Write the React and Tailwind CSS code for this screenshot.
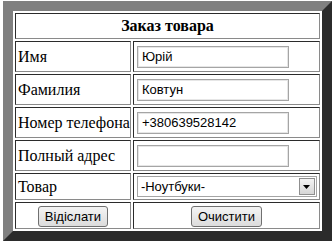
export default function App() {
  const cell = "border border-t-[#2b2b2b] border-l-[#2b2b2b] border-b-[#8a8a8a] border-r-[#8a8a8a] p-0";
  const label = cell + " w-[115px] pl-[2px] text-[16px] text-black";
  const input =
    "block w-[152px] h-[22px] border border-[#a5a5a5] shadow-[inset_0_0_0_1px_#e6e6e6] bg-white px-[4px] text-[13px] text-black outline-none font-['Liberation_Sans',Arial,sans-serif]";
  const btn =
    "h-[21px] px-[6px] rounded-[3px] border border-[#707070] bg-gradient-to-b from-[#f4f4f4] to-[#dcdcdc] text-[13px] text-black font-['Liberation_Sans',Arial,sans-serif]";

  const rows = [
    ["Имя", "Юрій"],
    ["Фамилия", "Ковтун"],
    ["Номер телефона", "+380639528142"],
    ["Полный адрес", ""],
  ];

  return (
    <div className="w-[336px] h-[243px] bg-white pt-[1px] pl-[3px] font-['Liberation_Serif','Times_New_Roman',serif]">
      <table className="w-[329px] border-separate border-spacing-[2px] border-[10px] border-t-[#808080] border-l-[#808080] border-b-[#2b2b2b] border-r-[#2b2b2b]">
        <tbody>
          <tr>
            <td colSpan={2} className={cell + " h-[25px] text-center text-[16px] font-bold"}>
              Заказ товара
            </td>
          </tr>
          {rows.map(([name, value]) => (
            <tr key={name}>
              <td className={label + " h-[31px] whitespace-nowrap"}>{name}</td>
              <td className={cell + " h-[31px] pl-[3px]"}>
                <input className={input} defaultValue={value} />
              </td>
            </tr>
          ))}
          <tr>
            <td className={label + " h-[27px]"}>Товар</td>
            <td className={cell + " h-[27px] pl-[3px]"}>
              <div className="relative w-[180px] h-[21px] border border-[#a5a5a5] bg-white">
                <div className="pl-[3px] text-[13px] leading-[19px] text-black font-['Liberation_Sans',Arial,sans-serif]">
                  -Ноутбуки-
                </div>
                <div className="absolute right-[1px] top-[1px] w-[16px] h-[17px] border border-[#8f8f8f] bg-gradient-to-b from-[#f4f4f4] to-[#d6d6d6] flex items-center justify-center">
                  <svg width="7" height="4" viewBox="0 0 7 4">
                    <path d="M0 0h7L3.5 4z" fill="#000" />
                  </svg>
                </div>
              </div>
            </td>
          </tr>
          <tr>
            <td className={cell + " h-[27px] text-center"}>
              <button className={btn}>Відіслати</button>
            </td>
            <td className={cell + " h-[27px] text-center"}>
              <button className={btn}>Очистити</button>
            </td>
          </tr>
        </tbody>
      </table>
    </div>
  );
}
